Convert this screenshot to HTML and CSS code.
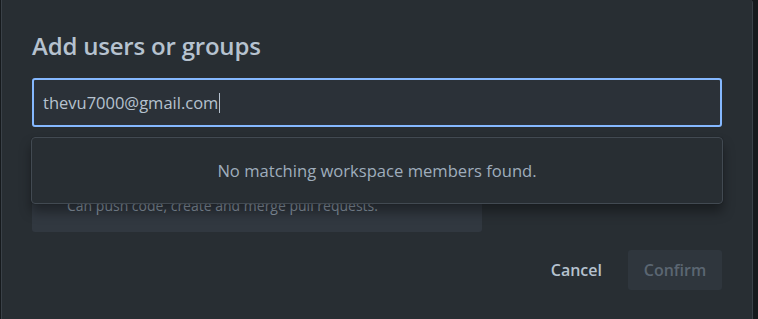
FILE: index.html
```html
<!DOCTYPE html>
<html lang="en">
<head>
<meta charset="utf-8">
<title>Add users or groups</title>
<link rel="stylesheet" href="styles.css">
</head>
<body>
<div class="modal">
  <h1 class="title">Add users or groups</h1>
  <div class="field">
    <div class="input"><span class="value">thevu7000@gmail.com</span><span class="caret"></span></div>
    <div class="menu">No matching workspace members found.</div>
  </div>
  <div class="role">
    <div class="role-name">Write</div>
    <div class="role-desc">Can push code, create and merge pull requests.</div>
  </div>
  <div class="actions">
    <button class="btn btn-subtle" type="button">Cancel</button>
    <button class="btn btn-primary" type="button" disabled>Confirm</button>
  </div>
</div>
</body>
</html>
```

FILE: styles.css
```css
* { box-sizing: border-box; }
html, body { margin: 0; height: 100%; }
body {
  background: #161a1d;
  font-family: "Open Sans", "Noto Sans", sans-serif;
  overflow: hidden;
}
.modal {
  margin-left: 1px;
  width: 752px;
  height: 340px;
  background: #282e33;
  border: 1px solid #3a4148;
  border-top: none;
  border-radius: 0 3px 0 0;
  padding: 0 30px;
  display: flex;
  flex-direction: column;
}
.title {
  margin: 30px 0 0;
  font-size: 24px;
  line-height: 32px;
  font-weight: 600;
  color: #b6c2cf;
  letter-spacing: -0.2px;
}
.field {
  position: relative;
  margin-top: 16px;
}
.input {
  height: 49px;
  border: 2px solid #85b8ff;
  border-radius: 3px;
  background: #2b3138;
  display: flex;
  align-items: center;
  padding: 0 9px;
  font-size: 16.5px;
  color: #b6c2cf;
}
.caret {
  display: inline-block;
  width: 1px;
  height: 20px;
  background: #b6c2cf;
  margin-left: 1px;
}
.menu {
  position: absolute;
  left: -1px;
  right: -1px;
  top: 59px;
  height: 67px;
  background: #282e33;
  border: 1px solid #424a52;
  border-radius: 4px;
  box-shadow: 0 8px 12px rgba(3, 4, 4, 0.36), 0 0 1px rgba(3, 4, 4, 0.5);
  display: flex;
  align-items: center;
  justify-content: center;
  font-size: 16.6px;
  color: #9fadbc;
  z-index: 2;
}
.role {
  margin-top: 16px;
  width: 450px;
  background: #313840;
  border-radius: 3px;
  padding: 14px 35px 16px;
}
.role-name {
  font-size: 14px;
  line-height: 20px;
  color: #b6c2cf;
  font-weight: 600;
}
.role-desc {
  margin-top: 19px;
  font-size: 14px;
  line-height: 20px;
  color: #8a97a5;
}
.actions {
  margin-top: 18px;
  display: flex;
  justify-content: flex-end;
  gap: 6px;
}
.btn {
  height: 40px;
  border: none;
  border-radius: 3px;
  font-family: inherit;
  font-size: 16px;
  font-weight: 600;
  padding: 0 15px;
  cursor: pointer;
}
.btn-subtle {
  background: transparent;
  color: #b6c2cf;
  padding: 0 20px;
}
.btn-primary {
  background: #2f363d;
  color: #5b6672;
  width: 94px;
}
```
